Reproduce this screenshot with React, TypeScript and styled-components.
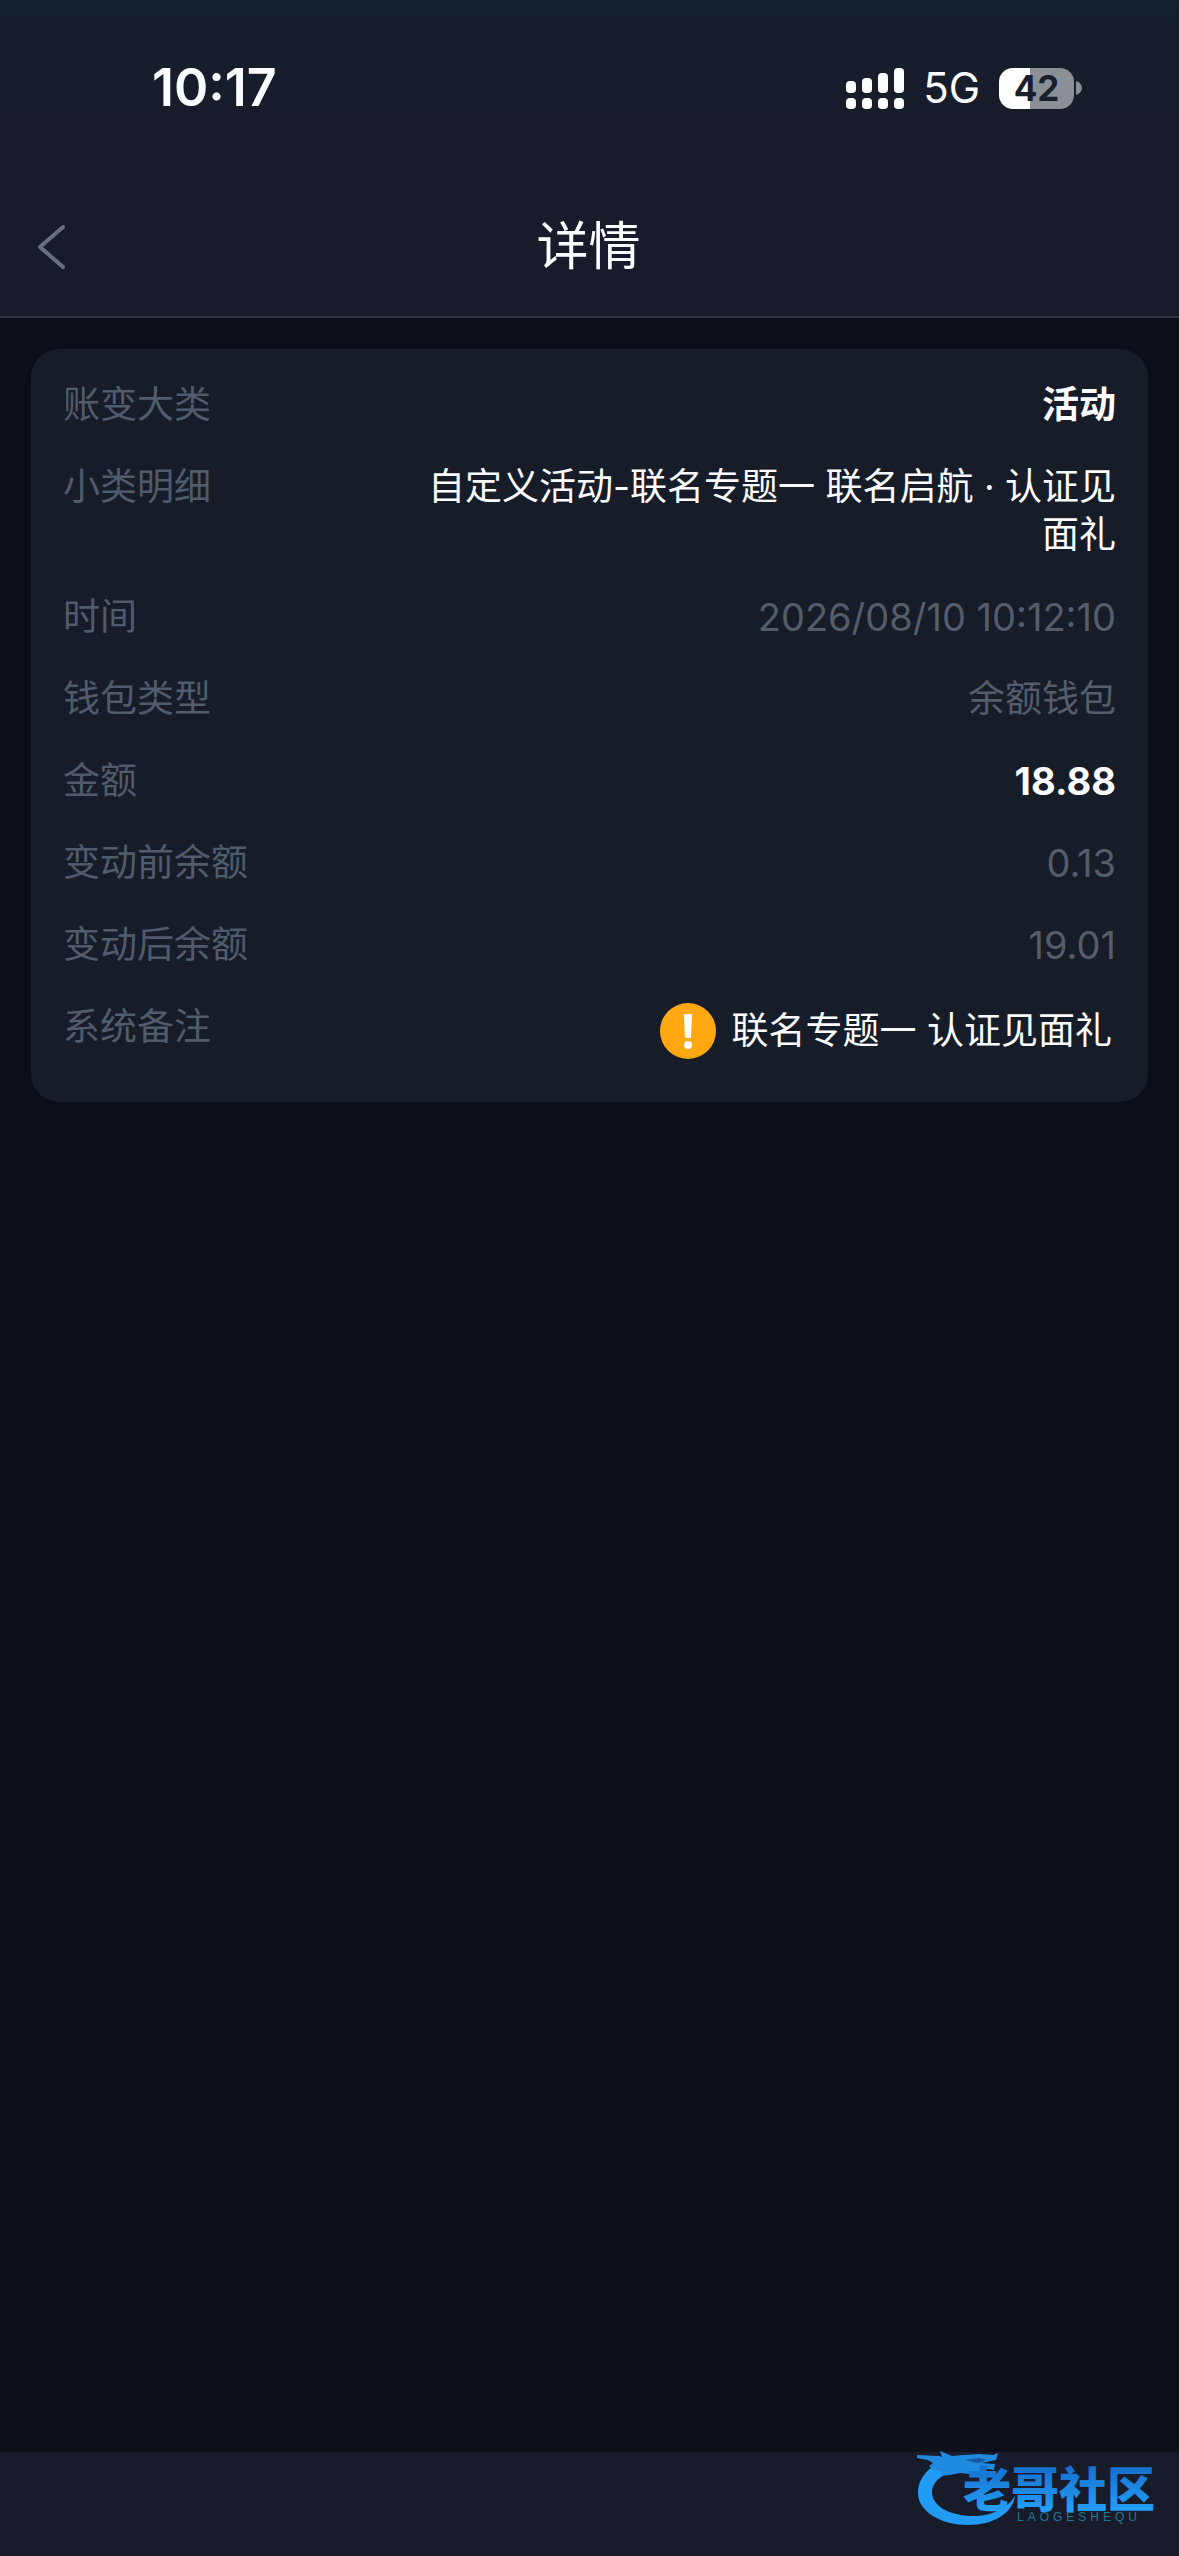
import React from "react";
import styled, { createGlobalStyle } from "styled-components";

const color = {
  page: "#0d1019",
  surface: "#181c2a",
  surfaceTint: "#161f2c",
  card: "#171c29",
  line: "#2c3342",
  muted: "#555c6a",
  label: "#505b6b",
  text: "#fbfcff",
  warn: "#ffa811",
};

const GlobalStyle = createGlobalStyle`
  *, *::before, *::after { box-sizing: border-box; }
  body {
    margin: 0;
    background: ${color.page};
    color: ${color.text};
    font-family: Inter, "Noto Sans CJK SC", sans-serif;
  }
`;

const Page = styled.div`
  display: flex;
  flex-direction: column;
  min-height: 100vh;
`;

const Header = styled.header`
  background: linear-gradient(${color.surfaceTint}, ${color.surface} 120px);
  border-bottom: 2px solid ${color.line};
`;

const StatusBar = styled.div`
  display: flex;
  align-items: center;
  justify-content: space-between;
  height: 176px;
  padding: 0 97px 0 152px;
`;

const Clock = styled.time`
  font-size: 52px;
  line-height: 64px;
  font-weight: 600;
`;

const StatusIcons = styled.div`
  display: flex;
  align-items: center;
  gap: 19px;
`;

const Network = styled.span`
  font-size: 42px;
  line-height: 48px;
`;

const Battery = styled.div`
  display: flex;
  align-items: center;
  gap: 2px;
`;

const BatteryBody = styled.span<{ $level: number }>`
  display: flex;
  align-items: center;
  justify-content: center;
  width: 75px;
  height: 41px;
  border-radius: 14px;
  background: linear-gradient(
    to right,
    #ffffff ${(p) => p.$level}%,
    #8b9097 ${(p) => p.$level}%
  );
  color: #1a202b;
  font-size: 35px;
  line-height: 41px;
  font-weight: 700;
`;

const NavBar = styled.nav`
  display: grid;
  grid-template-columns: 1fr auto 1fr;
  align-items: center;
  height: 140px;
  padding: 2px 32px 0 30px;
`;

const BackButton = styled.button`
  display: flex;
  align-items: center;
  justify-self: start;
  padding: 8px;
  border: 0;
  background: none;
  color: #687080;
  cursor: pointer;
`;

const Title = styled.h1`
  margin: 0;
  font-size: 52px;
  line-height: 64px;
  font-weight: 400;
`;

const Main = styled.main`
  flex: 1;
  padding: 31px 31px 30px;
`;

const Card = styled.dl`
  display: flex;
  flex-direction: column;
  gap: 34px;
  margin: 0;
  padding: 32px 32px 43px;
  border-radius: 28px;
  background: ${color.card};
  box-shadow: 0 0 24px rgba(0, 0, 0, 0.2);
`;

const Row = styled.div`
  display: flex;
  align-items: flex-start;
  justify-content: space-between;
  font-size: 37px;
  line-height: 48px;
`;

const Label = styled.dt`
  color: ${color.label};
`;

type Tone = "muted" | "normal" | "strong";

const Value = styled.dd<{ $tone: Tone; $numeric?: boolean }>`
  flex: 0 1 66%;
  margin: 0;
  text-align: right;
  color: ${(p) => (p.$tone === "muted" ? color.muted : color.text)};
  font-size: ${(p) => (p.$numeric ? 38 : 37)}px;
  font-weight: ${(p) => (p.$tone === "strong" ? 700 : 400)};
`;

const Remark = styled.span`
  display: flex;
  align-items: center;
  justify-content: flex-end;
  gap: 16px;
  padding-right: 4px;
`;

const Footer = styled.footer`
  display: flex;
  justify-content: flex-end;
  height: 104px;
  padding-right: 16px;
  background: ${color.surface};
`;

const Logo = styled.svg`
  overflow: visible;
`;

const SignalIcon = () => (
  <svg width="58" height="41" viewBox="0 0 58 41" fill="#fff" aria-hidden="true">
    <rect x="0" y="13" width="10" height="12" rx="4" />
    <rect x="16" y="10" width="10" height="15" rx="4" />
    <rect x="32" y="5" width="10" height="20" rx="4" />
    <rect x="48" y="0" width="10" height="25" rx="4" />
    <rect x="0" y="30" width="10" height="11" rx="4" />
    <rect x="16" y="30" width="10" height="11" rx="4" />
    <rect x="32" y="30" width="10" height="11" rx="4" />
    <rect x="48" y="30" width="10" height="11" rx="4" />
  </svg>
);

const BackIcon = () => (
  <svg width="27" height="44" viewBox="0 0 27 44" fill="none" aria-hidden="true">
    <path
      d="M25 2 2 22l23 20"
      stroke="currentColor"
      strokeWidth="4"
      strokeLinecap="round"
      strokeLinejoin="round"
    />
  </svg>
);

const WarnIcon = () => (
  <svg width="56" height="56" viewBox="0 0 56 56" aria-hidden="true">
    <circle cx="28" cy="28" r="28" fill={color.warn} />
    <path d="M24 11h8l-1 24h-6z" fill="#fff" />
    <circle cx="28" cy="42" r="4" fill="#fff" />
  </svg>
);

const BrandLogo = () => (
  <Logo width="248" height="84" viewBox="0 0 248 84" role="img" aria-label="老哥社区">
    <defs>
      <linearGradient id="name" x1="0" y1="14" x2="0" y2="56" gradientUnits="userSpaceOnUse">
        <stop offset="0" stopColor="#146fcb" />
        <stop offset="1" stopColor="#239cf5" />
      </linearGradient>
    </defs>
    <path
      d="M28 9C12 15 3 28 3 41c0 19 24 32 50 32 25 0 44-11 47-29-8 13-26 21-45 20-21-1-38-10-38-24 0-9 8-16 20-21z"
      fill="#229bf5"
    />
    <path
      d="M2 3l22 1 3 1-2-6 12 5 11-1 16-1 14 1 5-2-2 7-14 3 13 1-1 6-13-2-3 5-9 1-9-1-10 2-9 1 1-4-9-2-4-4 4-3-5-3-11-2z"
      fill="#1f8ae0"
    />
    <path d="M50 8l14-2 8 2-9 3z" fill="#1558a0" />
    <text
      x="48"
      y="55"
      fontSize="48"
      fontWeight="900"
      fontFamily='"Noto Sans CJK SC", sans-serif'
      fill="url(#name)"
    >
      老哥社区
    </text>
    <text
      x="102"
      y="69"
      fontSize="12"
      letterSpacing="4"
      fontFamily='"Liberation Sans", sans-serif'
      fill="#217796"
    >
      LAOGESHEQU
    </text>
  </Logo>
);

type Entry = {
  label: string;
  value: React.ReactNode;
  tone: Tone;
  numeric?: boolean;
};

const entries: Entry[] = [
  { label: "账变大类", value: "活动", tone: "strong" },
  {
    label: "小类明细",
    value: "自定义活动-联名专题一 联名启航 · 认证见面礼",
    tone: "normal",
  },
  { label: "时间", value: "2026/08/10 10:12:10", tone: "muted", numeric: true },
  { label: "钱包类型", value: "余额钱包", tone: "muted" },
  { label: "金额", value: "18.88", tone: "strong", numeric: true },
  { label: "变动前余额", value: "0.13", tone: "muted", numeric: true },
  { label: "变动后余额", value: "19.01", tone: "muted", numeric: true },
  {
    label: "系统备注",
    value: (
      <Remark>
        <WarnIcon />
        联名专题一 认证见面礼
      </Remark>
    ),
    tone: "normal",
  },
];

export default function App() {
  return (
    <Page lang="zh-CN">
      <GlobalStyle />
      <Header>
        <StatusBar>
          <Clock>10:17</Clock>
          <StatusIcons>
            <SignalIcon />
            <Network>5G</Network>
            <Battery>
              <BatteryBody $level={42}>42</BatteryBody>
              <svg width="6" height="14" viewBox="0 0 6 14" aria-hidden="true">
                <path d="M0 0c8 3 8 11 0 14z" fill="#8b9097" />
              </svg>
            </Battery>
          </StatusIcons>
        </StatusBar>
        <NavBar>
          <BackButton type="button" aria-label="返回">
            <BackIcon />
          </BackButton>
          <Title>详情</Title>
        </NavBar>
      </Header>
      <Main>
        <Card>
          {entries.map((entry) => (
            <Row key={entry.label}>
              <Label>{entry.label}</Label>
              <Value $tone={entry.tone} $numeric={entry.numeric}>
                {entry.value}
              </Value>
            </Row>
          ))}
        </Card>
      </Main>
      <Footer>
        <BrandLogo />
      </Footer>
    </Page>
  );
}
